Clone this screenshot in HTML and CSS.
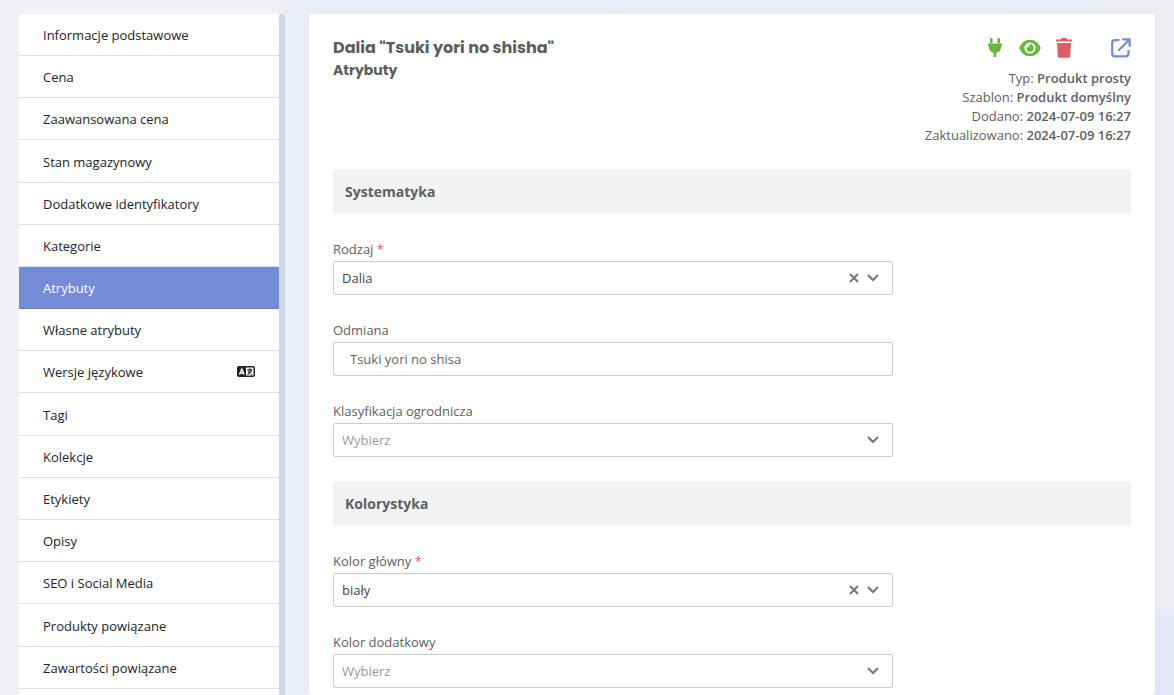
FILE: index.html
```html
<!DOCTYPE html>
<html lang="pl">
<head>
  <meta charset="UTF-8">
  <meta name="viewport" content="width=device-width, initial-scale=1.0">
  <title>Dalia "Tsuki yori no shisha" - Atrybuty</title>
  <link rel="stylesheet" href="styles.css">
</head>
<body>
  <div class="page">
    <aside class="sidebar">
      <nav class="menu">
        <ul>
          <li><a href="#">Informacje podstawowe</a></li>
          <li><a href="#">Cena</a></li>
          <li><a href="#">Zaawansowana cena</a></li>
        </ul>
        <ul>
          <li><a href="#">Stan magazynowy</a></li>
          <li><a href="#">Dodatkowe identyfikatory</a></li>
          <li><a href="#">Kategorie</a></li>
          <li><a href="#" class="active">Atrybuty</a></li>
          <li><a href="#">Własne atrybuty</a></li>
          <li>
            <a href="#">Wersje językowe
              <svg class="lang-icon" width="20" height="12" viewBox="0 0 20 12">
                <rect x="1" y="0" width="18" height="11" rx="2" fill="#212529"/>
                <path d="M3.500 8.500L5.800 3L8.100 8.500M4.500 7H7.200" fill="none" stroke="#fff" stroke-width="1.400"/>
                <rect x="10" y="1.500" width="7.500" height="8" rx="0.500" fill="#fff"/>
                <path d="M11.300 3.800H16.300M13.800 2.300V3.800M15.500 3.800C15 6 13.500 7.500 11.500 8.500M12.300 5C13 6.700 14.500 8 16.300 8.500" fill="none" stroke="#212529" stroke-width="1.200"/>
              </svg>
            </a>
          </li>
        </ul>
        <ul>
          <li><a href="#">Tagi</a></li>
          <li><a href="#">Kolekcje</a></li>
          <li><a href="#">Etykiety</a></li>
          <li><a href="#">Opisy</a></li>
          <li><a href="#">SEO i Social Media</a></li>
        </ul>
        <ul>
          <li><a href="#">Produkty powiązane</a></li>
          <li><a href="#">Zawartości powiązane</a></li>
        </ul>
      </nav>
      <div class="scrollbar"></div>
    </aside>

    <main class="card">
      <header class="card-header">
        <div>
          <h1>Dalia "Tsuki yori no shisha"</h1>
          <h2>Atrybuty</h2>
        </div>
        <div class="info">
          <div class="actions">
            <button type="button" class="green" aria-label="Aktywny">
              <svg width="20" height="20" viewBox="0 0 20 20" fill="currentColor">
                <rect x="5" y="0" width="2.600" height="5.500" rx="1.300"/>
                <rect x="12.400" y="0" width="2.600" height="5.500" rx="1.300"/>
                <path d="M3.500 5.500h13a.7.7 0 0 1 .7.700v.900a.7.7 0 0 1-.7.700h-.400v1.200a6.200 6.200 0 0 1-4.800 5.900V19h-2.600v-4.100a6.200 6.200 0 0 1-4.800-5.900V7.800h-.4a.7.7 0 0 1-.7-.7v-.9a.7.7 0 0 1 .7-.7z"/>
              </svg>
            </button>
            <button type="button" class="green" aria-label="Widoczny">
              <svg width="22" height="20" viewBox="0 0 22 20" fill="currentColor">
                <path fill-rule="evenodd" d="M11 1.800C16 1.800 19.700 5 21.500 9.300q.3.700 0 1.400C19.700 15 16 18.200 11 18.200S2.300 15 .5 10.700q-.3-.7 0-1.400C2.300 5 6 1.800 11 1.800zM11 4.500a5.500 5.500 0 1 0 0 11a5.500 5.500 0 1 0 0-11z"/>
                <path d="M11 6.300a3.700 3.700 0 1 1-3.700 3.700a3.700 3.700 0 0 1 .1-.6a2.500 2.500 0 0 0 3-3z"/>
              </svg>
            </button>
            <button type="button" class="red" aria-label="Usuń">
              <svg width="18" height="20" viewBox="0 0 18 20" fill="currentColor">
                <path d="M1.600 1.400h4L6.200.5q.3-.5.900-.5h3.800q.6 0 .9.500l.6.900h4q.8 0 .8.800v.7q0 .7-.8.700H1.600q-.8 0-.8-.7v-.7q0-.8.800-.8z"/>
                <path d="M2 5h14l-.8 13.200q-.1 1.500-1.600 1.500H4.400q-1.500 0-1.600-1.500z"/>
              </svg>
            </button>
            <a href="#" class="blue" aria-label="Otwórz w nowej karcie">
              <svg width="20" height="20" viewBox="0 0 20 20" fill="none" stroke="currentColor" stroke-width="2.200">
                <path d="M8.500 2.200H4Q1.200 2.200 1.200 5v10.500Q1.200 18.300 4 18.300h10.700q2.800 0 2.800-2.800V12"/>
                <path d="M8 12L18.500 1.500M12 1.400h6.600V8" stroke-linecap="round"/>
              </svg>
            </a>
          </div>
          <p>Typ: <b>Produkt prosty</b></p>
          <p>Szablon: <b>Produkt domyślny</b></p>
          <p>Dodano: <b>2024-07-09 16:27</b></p>
          <p>Zaktualizowano: <b>2024-07-09 16:27</b></p>
        </div>
      </header>

      <form class="form">
        <h3>Systematyka</h3>
        <div class="field">
          <label for="rodzaj">Rodzaj <span class="required">*</span></label>
          <div class="select">
            <select id="rodzaj">
              <option>Dalia</option>
            </select>
            <button type="button" class="clear" aria-label="Wyczyść">
              <svg width="10" height="10" viewBox="0 0 10 10"><path d="M1 1L9 9M9 1L1 9"/></svg>
            </button>
            <svg class="chevron" width="12" height="8" viewBox="0 0 12 8"><path d="M1 1L6 6L11 1"/></svg>
          </div>
        </div>
        <div class="field">
          <label for="odmiana">Odmiana</label>
          <input type="text" id="odmiana" value="Tsuki yori no shisa">
        </div>
        <div class="field">
          <label for="klasyfikacja">Klasyfikacja ogrodnicza</label>
          <div class="select">
            <select id="klasyfikacja" class="empty">
              <option>Wybierz</option>
            </select>
            <svg class="chevron" width="12" height="8" viewBox="0 0 12 8"><path d="M1 1L6 6L11 1"/></svg>
          </div>
        </div>

        <h3>Kolorystyka</h3>
        <div class="field">
          <label for="kolor">Kolor główny <span class="required">*</span></label>
          <div class="select">
            <select id="kolor">
              <option>biały</option>
            </select>
            <button type="button" class="clear" aria-label="Wyczyść">
              <svg width="10" height="10" viewBox="0 0 10 10"><path d="M1 1L9 9M9 1L1 9"/></svg>
            </button>
            <svg class="chevron" width="12" height="8" viewBox="0 0 12 8"><path d="M1 1L6 6L11 1"/></svg>
          </div>
        </div>
        <div class="field">
          <label for="kolor-dodatkowy">Kolor dodatkowy</label>
          <div class="select">
            <select id="kolor-dodatkowy" class="empty">
              <option>Wybierz</option>
            </select>
            <svg class="chevron" width="12" height="8" viewBox="0 0 12 8"><path d="M1 1L6 6L11 1"/></svg>
          </div>
        </div>
      </form>
    </main>
  </div>
</body>
</html>
```
FILE: styles.css
```css
* {
  margin: 0;
  padding: 0;
  box-sizing: border-box;
}

body {
  font-family: 'Segoe UI', 'Open Sans', sans-serif;
  font-size: 13px;
  color: #5f6061;
  background:
    radial-gradient(circle at 100% 100%, #e3e8f8 74px, transparent 94px),
    linear-gradient(to right, #f0f1f5 270px, #ebeef8 300px, #eaeef7 85%, #edeef3 98%);
  height: 100vh;
  overflow: hidden;
}

.page {
  display: flex;
  gap: 24px;
  height: 100%;
  padding: 14px 19px 0;
}

.sidebar {
  display: flex;
  flex: 0 0 266px;
}

.menu {
  display: flex;
  flex-direction: column;
  gap: 1px;
  flex: 1;
  background: #fff;
}

.menu ul {
  list-style: none;
}

.menu a {
  display: flex;
  align-items: center;
  justify-content: space-between;
  height: 42px;
  padding: 0 23px 0 24px;
  border-bottom: 1px solid #dee2e6;
  color: #212529;
  text-decoration: none;
}

.menu a:hover {
  background: #f2f4f6;
}

.menu a.active {
  background: #748bd7;
  border-color: #687dc1;
  color: #fff;
}

.scrollbar {
  width: 6px;
  background: #cbd6e7;
  border-radius: 3px 3px 0 0;
}

.card {
  flex: 1;
  padding: 24px;
  background: #fff;
  border-radius: 3px;
  box-shadow: 0 0 12px rgba(110, 130, 200, 0.06);
}

.card-header {
  display: flex;
  justify-content: space-between;
  margin-bottom: 24px;
}

h1,
h2 {
  font-family: 'Poppins', 'Inter', sans-serif;
  font-weight: 700;
  color: #5c5d5e;
}

h1 {
  font-size: 16px;
  line-height: 20px;
}

h2 {
  margin-top: 3px;
  font-size: 14px;
  line-height: 18px;
}

.info {
  line-height: 19px;
  text-align: right;
}

.info b {
  font-weight: 600;
}

.actions {
  display: flex;
  justify-content: flex-end;
  gap: 14px;
  height: 20px;
  margin-bottom: 11px;
}

.actions button {
  border: none;
  background: none;
  cursor: pointer;
}

.actions svg {
  display: block;
}

.green {
  color: #69b83d;
}

.red {
  color: #e25b6b;
}

.blue {
  margin-left: 24px;
  color: #748bd7;
}

.form {
  display: flex;
  flex-direction: column;
  gap: 24px;
}

h3 {
  padding: 0 12px;
  background: #f2f3f5;
  border-radius: 3px;
  font-size: 14px;
  line-height: 45px;
}

.field {
  max-width: 560px;
}

.field label {
  display: block;
  line-height: 23px;
}

.required {
  color: #e25b6b;
}

.field input,
.field select {
  display: block;
  width: 100%;
  height: 34px;
  border: 1px solid #ccc;
  border-radius: 2px;
  background: #fff;
  font: inherit;
  color: #666;
}

.field input {
  padding: 0 16px;
}

.field select {
  appearance: none;
  padding: 0 60px 0 8px;
  color: #444;
}

.field select.empty {
  color: #999;
}

.select {
  position: relative;
}

.select svg {
  display: block;
  fill: none;
  stroke: #777;
  stroke-width: 2;
}

.clear {
  position: absolute;
  right: 34px;
  top: 12px;
  border: none;
  background: none;
  cursor: pointer;
}

.chevron {
  position: absolute;
  right: 14px;
  top: 13px;
  pointer-events: none;
}
```
